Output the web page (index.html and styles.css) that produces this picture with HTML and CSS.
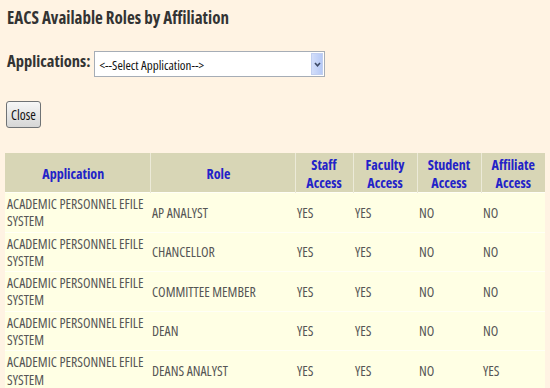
FILE: index.html
```html
<!DOCTYPE html>
<html>
<head>
<meta charset="utf-8">
<link rel="stylesheet" href="styles.css">
</head>
<body>
<div class="page">
  <h1 class="title">EACS Available Roles by Affiliation</h1>
  <div class="app-row">
    <span class="app-label">Applications:</span>
    <div class="select">
      <span class="select-text">&lt;--Select Application--&gt;</span>
      <span class="select-btn"><svg width="7" height="5" viewBox="0 0 7 5"><path d="M1 1 L3.5 3.8 L6 1" fill="none" stroke="#3d4a66" stroke-width="1.6"/></svg></span>
    </div>
  </div>
  <button class="close">Close</button>
  <table class="roles">
    <colgroup>
      <col class="w-app"><col class="w-role"><col class="w-staff"><col class="w-acc"><col class="w-acc"><col class="w-acc">
    </colgroup>
    <thead>
      <tr>
        <th class="h-wide">Application</th>
        <th class="h-wide">Role</th>
        <th>Staff<br>Access</th>
        <th>Faculty<br>Access</th>
        <th>Student<br>Access</th>
        <th>Affiliate<br>Access</th>
      </tr>
    </thead>
    <tbody>
      <tr><td>ACADEMIC PERSONNEL EFILE SYSTEM</td><td>AP ANALYST</td><td>YES</td><td>YES</td><td>NO</td><td>NO</td></tr>
      <tr><td>ACADEMIC PERSONNEL EFILE SYSTEM</td><td>CHANCELLOR</td><td>YES</td><td>YES</td><td>NO</td><td>NO</td></tr>
      <tr><td>ACADEMIC PERSONNEL EFILE SYSTEM</td><td>COMMITTEE MEMBER</td><td>YES</td><td>YES</td><td>NO</td><td>NO</td></tr>
      <tr><td>ACADEMIC PERSONNEL EFILE SYSTEM</td><td>DEAN</td><td>YES</td><td>YES</td><td>NO</td><td>NO</td></tr>
      <tr><td>ACADEMIC PERSONNEL EFILE SYSTEM</td><td>DEANS ANALYST</td><td>YES</td><td>YES</td><td>NO</td><td>YES</td></tr>
    </tbody>
  </table>
</div>
</body>
</html>
```

FILE: styles.css
```css
html, body {
  margin: 0;
  padding: 0;
  background: #fff3e3;
}
body {
  font-family: "Open Sans", "Roboto", sans-serif;
  font-stretch: 75%;
  color: #333;
}
.page {
  padding: 8px 5px 0 5px;
}
.title {
  margin: 0 0 0 2px;
  font-size: 17px;
  line-height: 20px;
  font-weight: 700;
  color: #333;
}
.app-row {
  display: flex;
  align-items: center;
  gap: 4px;
  margin: 23px 0 0 2px;
}
.app-label {
  font-size: 16.5px;
  font-weight: 700;
  color: #333;
  position: relative;
  top: -4px;
}
.select {
  display: flex;
  align-items: stretch;
  width: 229px;
  height: 24px;
  border: 1px solid #a6adb6;
  background: #fff;
}
.select-text {
  flex: 1;
  font-size: 13px;
  line-height: 24px;
  padding-left: 4px;
  padding-top: 1px;
  color: #111;
}
.select-btn {
  width: 10px;
  margin: 1px;
  display: flex;
  align-items: center;
  justify-content: center;
  background: linear-gradient(to right, #d3defa, #b6c9f6);
  border: 1px solid #c2cff0;
}
.close {
  display: block;
  margin: 24px 0 0 1px;
  width: 35px;
  height: 27px;
  padding: 0;
  font-family: inherit;
  font-stretch: 75%;
  font-size: 13.5px;
  color: #111;
  border: 1px solid #6f7275;
  border-radius: 3px;
  background: linear-gradient(to bottom, #f7f7f7, #e6e6e6 50%, #d6d6d6);
}
.roles {
  margin-top: 25px;
  width: 540px;
  table-layout: fixed;
  border-collapse: collapse;
}
.w-app, .w-role { width: 145px; }
.w-staff { width: 58px; }
.w-acc { width: 64px; }
.roles th {
  background: #d8d6b6;
  color: #2222c8;
  font-size: 14px;
  font-weight: 700;
  line-height: 17.5px;
  padding: 3px 2px 1px;
  text-align: center;
  border-right: 1px solid #ecead8;
  vertical-align: middle;
}
.roles th:last-child { border-right: none; }
.roles th.h-wide { padding-right: 10px; }
.roles td {
  background: #ffffe4;
  color: #555;
  font-size: 13.8px;
  line-height: 17.3px;
  padding: 2px 2px;
  vertical-align: middle;
  border-top: 1px solid #fffff6;
}
```
